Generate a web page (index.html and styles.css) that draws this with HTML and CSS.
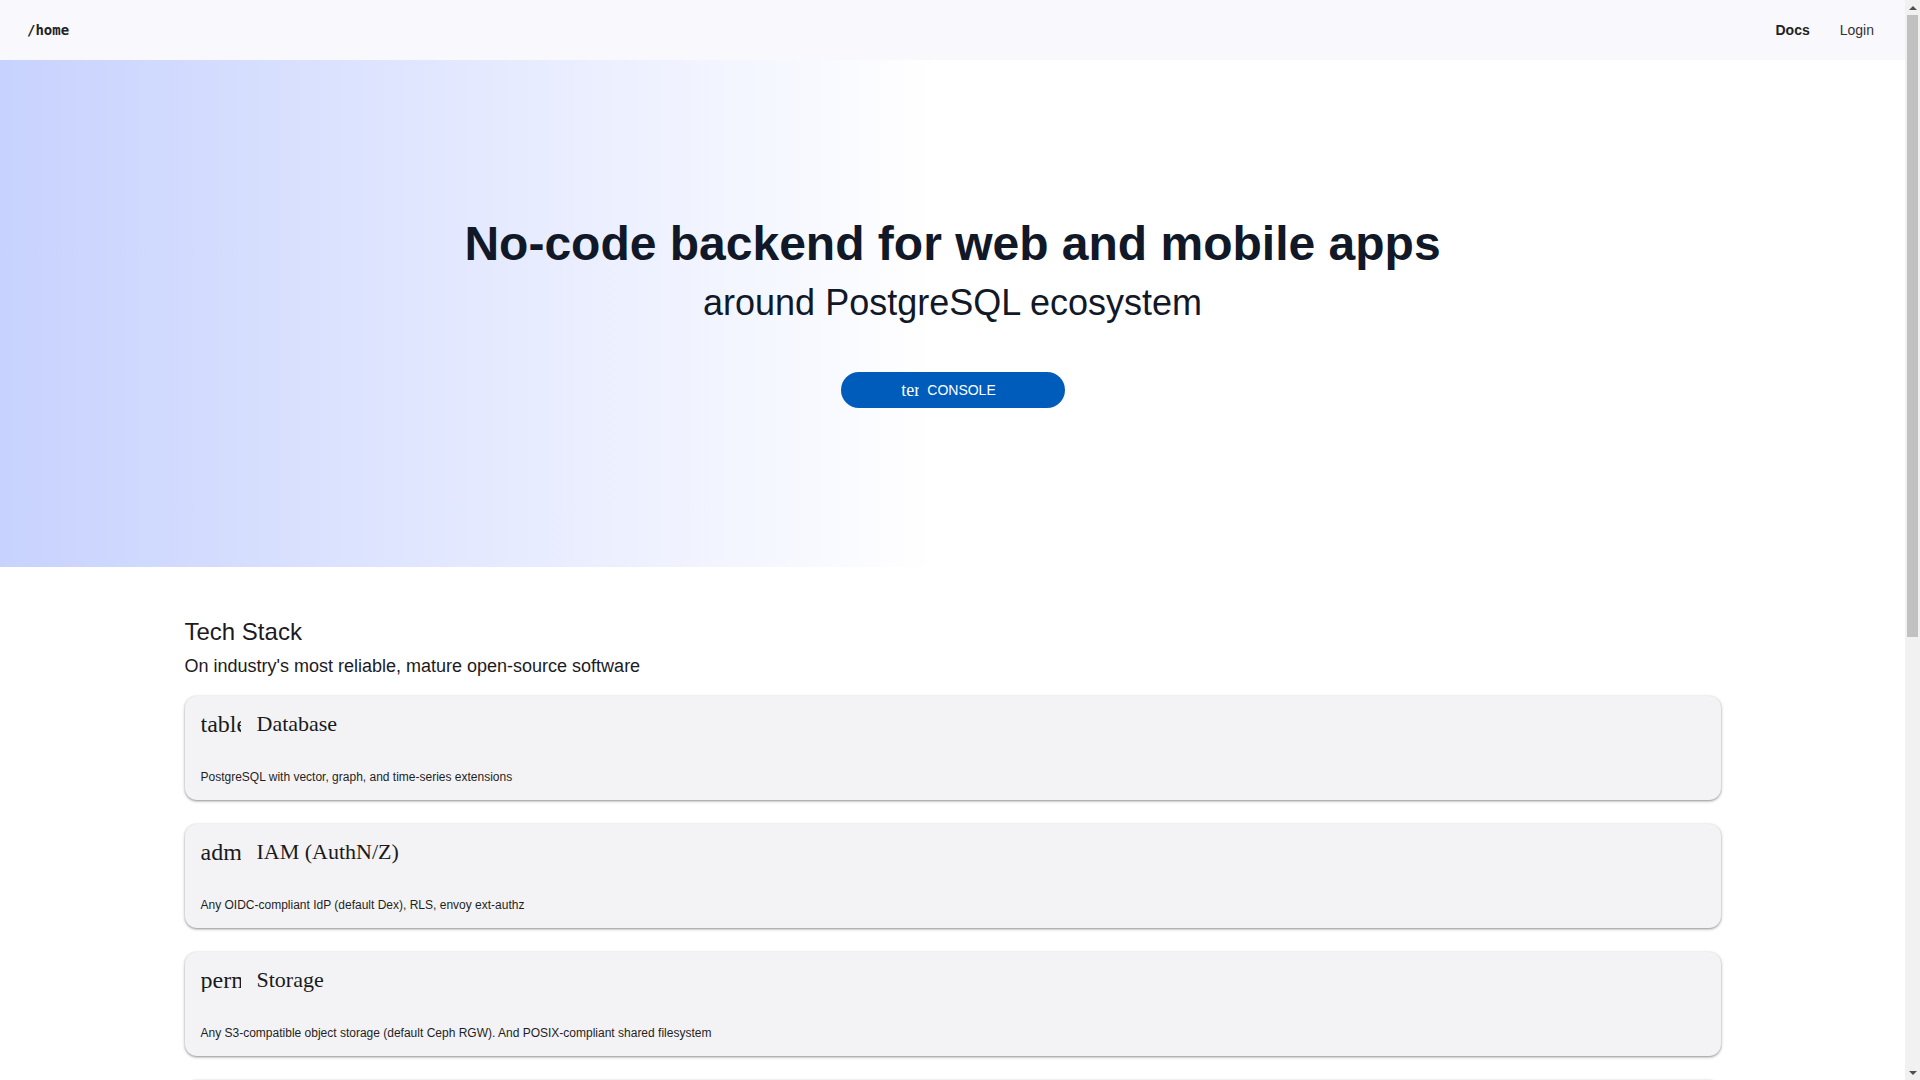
FILE: index.html
```html
<!DOCTYPE html>
<html lang="en">
<head>
  <meta charset="UTF-8" />
  <meta name="viewport" content="width=device-width, initial-scale=1.0" />
  <title>Home</title>
  <link rel="stylesheet" href="styles.css">
</head>
<body>
  <nav class="topbar">
    <a class="brand" href="#">/home</a>
    <div class="nav-links">
      <a class="active" href="#">Docs</a>
      <a href="#">Login</a>
    </div>
  </nav>

  <section class="hero">
    <h1>No-code backend for web and mobile apps</h1>
    <p class="tagline">around PostgreSQL ecosystem</p>
    <a class="console-btn" href="#"><span class="icon">terminal</span>CONSOLE</a>
  </section>

  <section class="stack">
    <h2>Tech Stack</h2>
    <p class="lead">On industry's most reliable, mature open-source software</p>

    <div class="cards">
      <div class="card">
        <div class="card-header">
          <span class="icon">table_chart</span>
          <span class="card-title">Database</span>
        </div>
        <p class="card-text">PostgreSQL with vector, graph, and time-series extensions</p>
      </div>
      <div class="card">
        <div class="card-header">
          <span class="icon">admin_panel_settings</span>
          <span class="card-title">IAM (AuthN/Z)</span>
        </div>
        <p class="card-text">Any OIDC-compliant IdP (default Dex), RLS, envoy ext-authz</p>
      </div>
      <div class="card">
        <div class="card-header">
          <span class="icon">perm_media</span>
          <span class="card-title">Storage</span>
        </div>
        <p class="card-text">Any S3-compatible object storage (default Ceph RGW). And POSIX-compliant shared filesystem</p>
      </div>
      <div class="card">
        <div class="card-header">
          <span class="icon">api</span>
          <span class="card-title">API</span>
        </div>
        <p class="card-text">Auto-generated REST and GraphQL APIs straight from your schema</p>
      </div>
      <div class="card">
        <div class="card-header">
          <span class="icon">bolt</span>
          <span class="card-title">Realtime</span>
        </div>
        <p class="card-text">Listen to database changes over websockets</p>
      </div>
      <div class="card">
        <div class="card-header">
          <span class="icon">functions</span>
          <span class="card-title">Functions</span>
        </div>
        <p class="card-text">Serverless functions on Knative, any language</p>
      </div>
      <div class="card">
        <div class="card-header">
          <span class="icon">queue</span>
          <span class="card-title">Queues</span>
        </div>
        <p class="card-text">Durable message queues and scheduled jobs inside PostgreSQL</p>
      </div>
      <div class="card">
        <div class="card-header">
          <span class="icon">monitoring</span>
          <span class="card-title">Observability</span>
        </div>
        <p class="card-text">Metrics, logs and traces with Prometheus, Loki and OpenTelemetry</p>
      </div>
    </div>
  </section>

  <footer class="footer">&copy; home</footer>

  <div class="scrollbar">
    <span class="arrow up"></span>
    <span class="thumb"></span>
    <span class="arrow down"></span>
  </div>
</body>
</html>
```

FILE: styles.css
```css
* { box-sizing: border-box; }
body {
  margin: 0 15px 0 0;
  font-family: "Liberation Sans", Arial, sans-serif;
  background: #fff;
  color: #1a1b20;
}
a { text-decoration: none; color: inherit; }

.topbar {
  height: 60px;
  display: flex;
  align-items: center;
  justify-content: space-between;
  padding: 0 16px 0 27px;
  background: #f9f9fd;
}
.brand {
  font-family: "DejaVu Sans Mono", "Liberation Mono", monospace;
  font-size: 14px;
  font-weight: bold;
  line-height: 20px;
  color: #222;
}
.nav-links {
  display: flex;
}
.nav-links a {
  font-size: 14px;
  line-height: 20px;
  padding: 0 15px;
  color: #333;
}
.nav-links a.active {
  font-weight: bold;
  color: #222;
}

.hero {
  height: 507px;
  display: flex;
  flex-direction: column;
  align-items: center;
  justify-content: center;
  background: linear-gradient(to right, #c7d2fe 0%, #fff 49%, #fff 100%);
  color: #111827;
}
.hero h1 {
  margin: 0;
  font-size: 48px;
  line-height: 48px;
  font-weight: bold;
}
.tagline {
  margin: 15px 0 0;
  font-size: 36px;
  line-height: 40px;
}
.console-btn {
  margin-top: 49px;
  width: 224px;
  height: 36px;
  border-radius: 18px;
  background: #005cbb;
  color: #fff;
  display: flex;
  align-items: center;
  justify-content: center;
  gap: 8px;
  padding: 0 24px 0 16px;
  font-size: 14px;
  line-height: 20px;
}
.console-btn .icon {
  width: 18px;
  height: 18px;
  font-size: 18px;
  line-height: 18px;
}
.icon {
  font-family: "Liberation Serif", "Times New Roman", serif;
  white-space: nowrap;
  overflow: hidden;
  display: inline-block;
}

.stack {
  max-width: 1536px;
  margin: 0 auto;
  padding: 49px 0 48px;
}
.stack h2 {
  margin: 0;
  font-size: 24px;
  line-height: 32px;
  font-weight: normal;
  color: #1b1b1f;
}
.lead {
  margin: 4px 0 16px;
  font-size: 18px;
  line-height: 28px;
  color: #1b1b1f;
}
.cards {
  display: flex;
  flex-direction: column;
  gap: 24px;
}
.card {
  background: #f3f3f6;
  border-radius: 12px;
  padding: 16px;
  box-shadow: 0 1px 2px rgba(0, 0, 0, 0.3), 0 1px 3px 1px rgba(0, 0, 0, 0.12);
}
.card-header {
  height: 40px;
  display: flex;
  align-items: flex-start;
  gap: 16px;
}
.card-header .icon {
  width: 40px;
  font-size: 24px;
  line-height: 24px;
}
.card-title {
  font-family: "Liberation Serif", "Times New Roman", serif;
  font-size: 22px;
  line-height: 24px;
}
.card-text {
  margin: 18px 0 0;
  font-size: 12px;
  color: #1f1f23;
}

.footer {
  height: 80px;
  display: flex;
  align-items: center;
  justify-content: center;
  font-size: 12px;
  color: #666;
}

/* browser scrollbar, as in the screenshot */
.scrollbar {
  position: fixed;
  top: 0;
  right: 0;
  bottom: 0;
  width: 15px;
  background: #f1f1f1;
  display: flex;
  flex-direction: column;
  align-items: center;
}
.arrow {
  height: 15px;
  width: 15px;
  display: flex;
  align-items: center;
  justify-content: center;
}
.arrow::before {
  content: "";
  border-left: 4px solid transparent;
  border-right: 4px solid transparent;
}
.arrow.up::before { border-bottom: 4px solid #505050; }
.arrow.down::before { border-top: 4px solid #505050; }
.thumb {
  width: 11px;
  height: 622px;
  background: #c1c1c1;
}
.arrow.down { margin-top: auto; }
```
